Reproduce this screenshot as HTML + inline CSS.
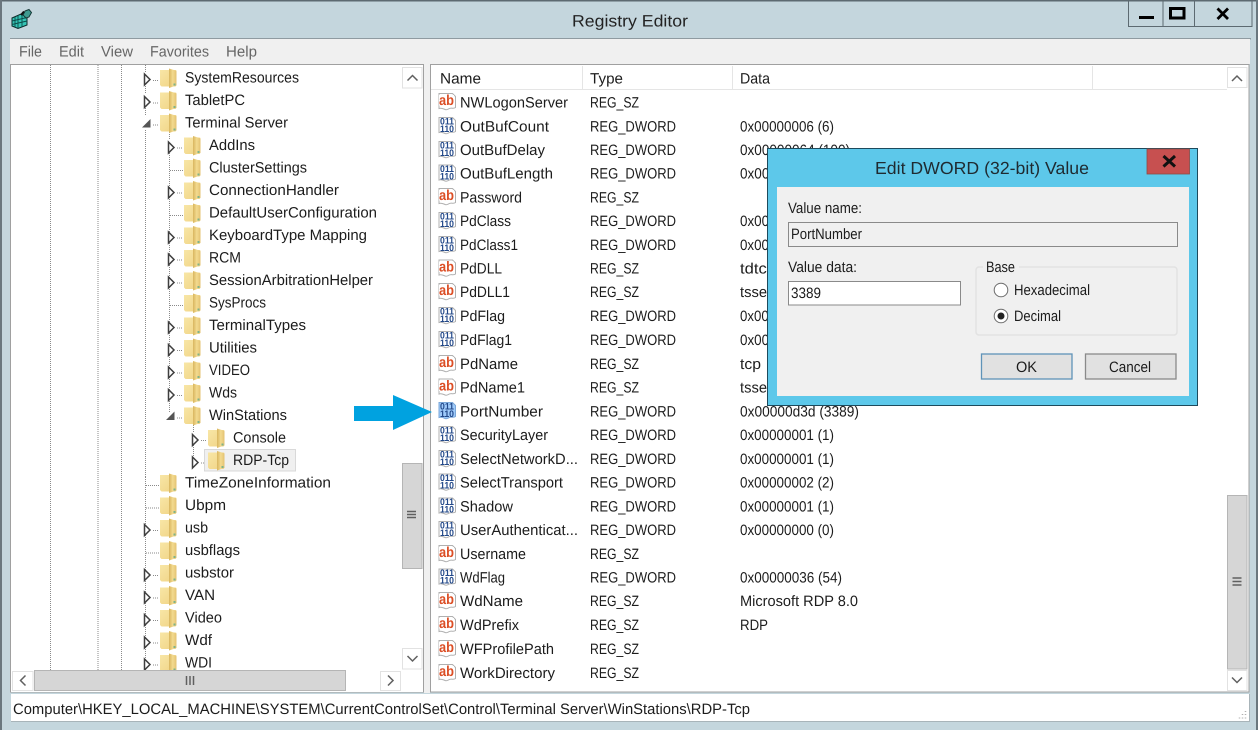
<!DOCTYPE html>
<html><head><meta charset="utf-8"><title>Registry Editor</title>
<style>
html,body{margin:0;padding:0;width:1258px;height:730px;overflow:hidden;background:#c4d6dd}
svg{display:block;filter:blur(.35px);text-rendering:geometricPrecision}
text{font-family:"Liberation Sans",sans-serif;font-size:15px;fill:#1c1c1c}
.m{fill:#666}
.d{font-size:15px}
.dot{stroke:#8a8a8a;stroke-width:1;stroke-dasharray:1 1;fill:none}
</style></head><body>
<svg width="1258" height="730" viewBox="0 0 1258 730" xmlns="http://www.w3.org/2000/svg">
<defs>
<linearGradient id="fg" x1="0" x2="1" y1="0" y2="1"><stop offset="0" stop-color="#f8e6a6"/><stop offset="1" stop-color="#f0d384"/></linearGradient>
<linearGradient id="ff" x1="0" x2="1" y1="0" y2="0"><stop offset="0" stop-color="#d9b65f"/><stop offset=".5" stop-color="#f3da8f"/><stop offset="1" stop-color="#e3c271"/></linearGradient>
<symbol id="f" width="19" height="21" viewBox="0 0 19 21" overflow="visible">
<path d="M1 2h15.500c.6 0 1 .4 1 1V17l-1 1.500H2.500L1 17z" fill="url(#fg)"/>
<path d="M10 .5l6.500 2c.7.3 1 .6 1 1.400V17.500l-7.500 2.500z" fill="url(#ff)"/>
<path d="M14.500 15.500h2v2h-2z" fill="#7eb38a"/>
</symbol>
<symbol id="ab" width="19" height="20" viewBox="0 0 19 20" overflow="visible">
<path d="M1 1.500h13.500l3 3V15.500c-2 1.500-3.500.2-5.500.8s-3 2-5 1.200S3.500 15.500 1 16.500z" fill="#fff" stroke="#b0b0b0"/>
<rect x="1" y="3" width="15" height="10.500" fill="#fff"/>
<text x="1" y="13" style="font-size:14.500px;font-weight:bold;fill:#dc4f26" textLength="15" lengthAdjust="spacingAndGlyphs">ab</text>
</symbol>
<symbol id="bn" width="19" height="20" viewBox="0 0 19 20" overflow="visible">
<path d="M1 1.500h13.500l3 3V15.500c-2 1.500-3.500.2-5.500.8s-3 2-5 1.200S3.500 15.500 1 16.500z" fill="#fff" stroke="#b0b0b0"/>
<text x="2" y="8.500" style="font-size:9.500px;font-weight:bold;fill:#23498a" textLength="14" lengthAdjust="spacingAndGlyphs">011</text>
<text x="2" y="16" style="font-size:9.500px;font-weight:bold;fill:#23498a" textLength="14" lengthAdjust="spacingAndGlyphs">110</text>
</symbol>
<symbol id="e" width="10" height="14" viewBox="0 0 10 14" overflow="visible"><path d="M1.500 1v11l5.500-5.500z" fill="#fff" stroke="#3f3f3f" stroke-width="1.500"/></symbol>
<symbol id="x" width="10" height="10" viewBox="0 0 10 10" overflow="visible"><path d="M9 0v8.500H.5z" fill="#555"/></symbol>
<clipPath id="tc"><rect x="11" y="65" width="391" height="605"/></clipPath>
<clipPath id="lc"><rect x="431" y="66" width="796" height="626"/></clipPath>
</defs>

<!-- window frame -->
<rect width="1258" height="730" fill="#c4d6dd"/>
<rect x="0" y="0" width="1258" height="1.500" fill="#5d6a71"/>
<rect x="0" y="0" width="2" height="730" fill="#6a777e"/>
<rect x="1256" y="0" width="2" height="730" fill="#6a777e"/>

<!-- icon -->
<g>
<path d="M12 18l9-4 6 3v8l-9 3.500-6-2.500z" fill="#34c3b4" stroke="#0c2b2a"/>
<path d="M15 17v10M18 16v12M22 15v12M12 21l15-3.500M12 24.500l15-3.500" stroke="#0b4c4a" stroke-width=".9"/>
<path d="M25 11l4-1.500 2.500 3-2.500 4.500-3 1-3-3z" fill="#3f9a90" stroke="#163a38"/>
<path d="M21 15l3-3.500" stroke="#111" stroke-width="2"/>
</g>
<text x="572" y="26.500" style="font-size:16.500px;fill:#222" textLength="116" lengthAdjust="spacingAndGlyphs">Registry Editor</text>

<!-- caption buttons -->
<path d="M1128.500 1v25.500h123.500V1M1163 1v25.500M1194.500 1v25.500" fill="none" stroke="#5d6a71"/>
<rect x="1139" y="16" width="15" height="3" fill="#000"/>
<rect x="1170.500" y="8.500" width="13.500" height="9.500" fill="none" stroke="#000" stroke-width="3"/>
<path d="M1217.500 8.500l10.500 10.500M1228 8.500l-10.500 10.500" stroke="#000" stroke-width="2.800"/>

<!-- menu -->
<rect x="10" y="38" width="1241" height="1.500" fill="#8f9ba1"/>
<rect x="10" y="39" width="1240" height="25" fill="#f0f0f0"/>
<text class="m" x="19" y="56.500" textLength="23" lengthAdjust="spacingAndGlyphs">File</text>
<text class="m" x="59" y="56.500" textLength="25" lengthAdjust="spacingAndGlyphs">Edit</text>
<text class="m" x="101" y="56.500" textLength="32" lengthAdjust="spacingAndGlyphs">View</text>
<text class="m" x="150" y="56.500" textLength="59" lengthAdjust="spacingAndGlyphs">Favorites</text>
<text class="m" x="226" y="56.500" textLength="31" lengthAdjust="spacingAndGlyphs">Help</text>

<!-- panes -->
<rect x="10.500" y="64.500" width="413" height="627.500" fill="#fff" stroke="#a0a0a0"/>
<rect x="424" y="64" width="6" height="629" fill="#f0f0f0"/>
<rect x="430.500" y="64.500" width="818.500" height="627.500" fill="#fff" stroke="#a0a0a0"/>

<!-- tree -->
<g clip-path="url(#tc)">
<path class="dot" d="M50.500 65V670M98 65V670M121.500 65V670M145.500 65V72M145.500 86V94M145.500 108V116M145.500 130V477M145.500 477V670M169.500 132V139M169.500 153V412M193.500 425V433M193.500 445V456"/>
<path class="dot" d="M153 80.500h6M153 103h6M153 125h6M177 148h6M170 170.500h13M177 193h6M170 215.500h13M177 238h6M177 260h6M177 283h6M170 305.500h13M177 328h6M177 350.500h6M177 373h6M177 395.500h6M177 418h6M201 440.500h6M201 463h6M146 485.500h13M146 508h13M153 530.500h6M146 553h13M153 575.500h6M153 598h6M153 620.500h6M153 643h6M153 665h6"/>
<rect x="204.500" y="449.500" width="91" height="21.500" fill="#f0f0f0" stroke="#d9d9d9"/>

<use href="#e" x="143" y="73"/><use href="#e" x="143" y="95.500"/><use href="#x" x="141.500" y="119"/>
<use href="#e" x="167" y="141"/><use href="#e" x="167" y="186"/><use href="#e" x="167" y="231"/><use href="#e" x="167" y="253"/><use href="#e" x="167" y="276"/><use href="#e" x="167" y="321"/><use href="#e" x="167" y="343.500"/><use href="#e" x="167" y="366"/><use href="#e" x="167" y="388.500"/><use href="#x" x="165.500" y="411.500"/>
<use href="#e" x="191" y="433.500"/><use href="#e" x="191" y="456"/>
<use href="#e" x="143" y="523.500"/><use href="#e" x="143" y="568.500"/><use href="#e" x="143" y="591"/><use href="#e" x="143" y="613.500"/><use href="#e" x="143" y="636"/><use href="#e" x="143" y="658"/>

<use href="#f" x="159" y="68"/><use href="#f" x="159" y="90.500"/><use href="#f" x="159" y="113"/>
<use href="#f" x="183" y="135.500"/><use href="#f" x="183" y="158"/><use href="#f" x="183" y="180.500"/><use href="#f" x="183" y="203"/><use href="#f" x="183" y="225.500"/><use href="#f" x="183" y="248"/><use href="#f" x="183" y="270.500"/><use href="#f" x="183" y="293"/><use href="#f" x="183" y="315.500"/><use href="#f" x="183" y="338"/><use href="#f" x="183" y="360.500"/><use href="#f" x="183" y="383"/><use href="#f" x="183" y="405.500"/>
<use href="#f" x="207" y="428"/><use href="#f" x="207" y="450.500"/>
<use href="#f" x="159" y="473"/><use href="#f" x="159" y="495.500"/><use href="#f" x="159" y="518"/><use href="#f" x="159" y="540.500"/><use href="#f" x="159" y="563"/><use href="#f" x="159" y="585.500"/><use href="#f" x="159" y="608"/><use href="#f" x="159" y="630.500"/><use href="#f" x="159" y="653"/>

<text x="185" y="82.500" textLength="114" lengthAdjust="spacingAndGlyphs">SystemResources</text>
<text x="185" y="105" textLength="60" lengthAdjust="spacingAndGlyphs">TabletPC</text>
<text x="185" y="127.500" textLength="103" lengthAdjust="spacingAndGlyphs">Terminal Server</text>
<text x="209" y="150" textLength="46" lengthAdjust="spacingAndGlyphs">AddIns</text>
<text x="209" y="172.500" textLength="98" lengthAdjust="spacingAndGlyphs">ClusterSettings</text>
<text x="209" y="195" textLength="130" lengthAdjust="spacingAndGlyphs">ConnectionHandler</text>
<text x="209" y="217.500" textLength="168" lengthAdjust="spacingAndGlyphs">DefaultUserConfiguration</text>
<text x="209" y="240" textLength="158" lengthAdjust="spacingAndGlyphs">KeyboardType Mapping</text>
<text x="209" y="262.500" textLength="32" lengthAdjust="spacingAndGlyphs">RCM</text>
<text x="209" y="285" textLength="164" lengthAdjust="spacingAndGlyphs">SessionArbitrationHelper</text>
<text x="209" y="307.500" textLength="57" lengthAdjust="spacingAndGlyphs">SysProcs</text>
<text x="209" y="330" textLength="97" lengthAdjust="spacingAndGlyphs">TerminalTypes</text>
<text x="209" y="352.500" textLength="48" lengthAdjust="spacingAndGlyphs">Utilities</text>
<text x="209" y="375" textLength="41" lengthAdjust="spacingAndGlyphs">VIDEO</text>
<text x="209" y="397.500" textLength="28" lengthAdjust="spacingAndGlyphs">Wds</text>
<text x="209" y="420" textLength="78" lengthAdjust="spacingAndGlyphs">WinStations</text>
<text x="233" y="442.500" textLength="53" lengthAdjust="spacingAndGlyphs">Console</text>
<text x="233" y="465" textLength="56" lengthAdjust="spacingAndGlyphs">RDP-Tcp</text>
<text x="185" y="487.500" textLength="146" lengthAdjust="spacingAndGlyphs">TimeZoneInformation</text>
<text x="185" y="510" textLength="41" lengthAdjust="spacingAndGlyphs">Ubpm</text>
<text x="185" y="532.500" textLength="23" lengthAdjust="spacingAndGlyphs">usb</text>
<text x="185" y="555" textLength="55" lengthAdjust="spacingAndGlyphs">usbflags</text>
<text x="185" y="577.500" textLength="49" lengthAdjust="spacingAndGlyphs">usbstor</text>
<text x="185" y="600" textLength="30" lengthAdjust="spacingAndGlyphs">VAN</text>
<text x="185" y="622.500" textLength="37" lengthAdjust="spacingAndGlyphs">Video</text>
<text x="185" y="645" textLength="27" lengthAdjust="spacingAndGlyphs">Wdf</text>
<text x="185" y="667.500" textLength="27" lengthAdjust="spacingAndGlyphs">WDI</text>
</g>

<!-- tree scrollbars -->
<rect x="402" y="65.500" width="21" height="604" fill="#fff"/>
<rect x="402.500" y="67.500" width="19.500" height="20.500" fill="#fff" stroke="#e2e2e2"/>
<path d="M407.500 80.500l5-5 5 5" fill="none" stroke="#606060" stroke-width="1.500"/>
<rect x="402.500" y="463.500" width="19.500" height="105" fill="#d6d6d6" stroke="#b5b5b5"/>
<path d="M407 511.500h9M407 514.500h9M407 517.500h9" stroke="#606060" stroke-width="1.500"/>
<rect x="402.500" y="648.500" width="19.500" height="20.500" fill="#fff" stroke="#e2e2e2"/>
<path d="M407.500 656l5 5 5-5" fill="none" stroke="#606060" stroke-width="1.500"/>
<rect x="11" y="670" width="412" height="22" fill="#fff"/>
<rect x="12.500" y="671.500" width="20.500" height="19" fill="#fff" stroke="#e2e2e2"/>
<path d="M25.500 675.500l-5 5 5 5" fill="none" stroke="#606060" stroke-width="1.500"/>
<rect x="34.500" y="670.500" width="311" height="20" fill="#d6d6d6" stroke="#b5b5b5"/>
<path d="M186.500 676v9M190 676v9M193.500 676v9" stroke="#606060" stroke-width="1.500"/>
<rect x="380.500" y="671.500" width="20" height="19" fill="#fff" stroke="#e2e2e2"/>
<path d="M388 675.500l5 5-5 5" fill="none" stroke="#606060" stroke-width="1.500"/>

<!-- list header -->
<rect x="431" y="65" width="796" height="24" fill="#fff"/>
<path d="M431 89.500h796M582.500 66v23M732.500 66v23M1092.500 66v23" stroke="#e5e5e5" fill="none"/>
<text x="440" y="83.500" textLength="41" lengthAdjust="spacingAndGlyphs">Name</text>
<text x="590" y="83.500" textLength="33" lengthAdjust="spacingAndGlyphs">Type</text>
<text x="740" y="83.500" textLength="30" lengthAdjust="spacingAndGlyphs">Data</text>

<!-- list scrollbar -->
<rect x="1227" y="66" width="21" height="625" fill="#fff"/>
<rect x="1227.500" y="67.500" width="19.500" height="20" fill="#fff" stroke="#e2e2e2"/>
<path d="M1232 81l5-5 5 5" fill="none" stroke="#606060" stroke-width="1.500"/>
<rect x="1227.500" y="495.500" width="19.500" height="173.500" fill="#d6d6d6" stroke="#b5b5b5"/>
<path d="M1232.500 578h9M1232.500 581.500h9M1232.500 585h9" stroke="#606060" stroke-width="1.500"/>
<rect x="1227.500" y="670.500" width="19.500" height="20" fill="#fff" stroke="#e2e2e2"/>
<path d="M1232 677.500l5 5 5-5" fill="none" stroke="#606060" stroke-width="1.500"/>

<!-- list rows -->
<g clip-path="url(#lc)">
<use href="#ab" x="438" y="92"/><use href="#bn" x="438" y="116"/><use href="#bn" x="438" y="140"/><use href="#bn" x="438" y="163.500"/><use href="#ab" x="438" y="187"/><use href="#bn" x="438" y="211"/><use href="#bn" x="438" y="235"/><use href="#ab" x="438" y="258.500"/><use href="#ab" x="438" y="282"/><use href="#bn" x="438" y="306"/><use href="#bn" x="438" y="330"/><use href="#ab" x="438" y="354"/><use href="#ab" x="438" y="377.500"/>
<path d="M439 402.500h13.500l3 3v11c-2 1.500-3.500.2-5.500.8s-3 2-5 1.200-3-2-6-1z" fill="#9fcbfb" stroke="#7ba7d8"/>
<text x="440" y="409.500" style="font-size:9.500px;font-weight:bold;fill:#23498a" textLength="14" lengthAdjust="spacingAndGlyphs">011</text>
<text x="440" y="417" style="font-size:9.500px;font-weight:bold;fill:#23498a" textLength="14" lengthAdjust="spacingAndGlyphs">110</text>
<use href="#bn" x="438" y="425"/><use href="#bn" x="438" y="449"/><use href="#bn" x="438" y="472.500"/><use href="#bn" x="438" y="496.500"/><use href="#bn" x="438" y="520"/><use href="#ab" x="438" y="544"/><use href="#bn" x="438" y="567.500"/><use href="#ab" x="438" y="591"/><use href="#ab" x="438" y="615"/><use href="#ab" x="438" y="639"/><use href="#ab" x="438" y="663"/>

<text x="460" y="107.500" textLength="108" lengthAdjust="spacingAndGlyphs">NWLogonServer</text><text class="d" x="590" y="107.500" textLength="49" lengthAdjust="spacingAndGlyphs">REG_SZ</text>
<text x="460" y="131.500" textLength="89" lengthAdjust="spacingAndGlyphs">OutBufCount</text><text class="d" x="590" y="131.500" textLength="86" lengthAdjust="spacingAndGlyphs">REG_DWORD</text><text class="d" x="740" y="131.500" textLength="94" lengthAdjust="spacingAndGlyphs">0x00000006 (6)</text>
<text x="460" y="155" textLength="85" lengthAdjust="spacingAndGlyphs">OutBufDelay</text><text class="d" x="590" y="155" textLength="86" lengthAdjust="spacingAndGlyphs">REG_DWORD</text><text class="d" x="740" y="155" textLength="110" lengthAdjust="spacingAndGlyphs">0x00000064 (100)</text>
<text x="460" y="178.500" textLength="93" lengthAdjust="spacingAndGlyphs">OutBufLength</text><text class="d" x="590" y="178.500" textLength="86" lengthAdjust="spacingAndGlyphs">REG_DWORD</text><text class="d" x="740" y="178.500" textLength="110" lengthAdjust="spacingAndGlyphs">0x00000212 (530)</text>
<text x="460" y="202.500" textLength="62" lengthAdjust="spacingAndGlyphs">Password</text><text class="d" x="590" y="202.500" textLength="49" lengthAdjust="spacingAndGlyphs">REG_SZ</text>
<text x="460" y="226" textLength="51" lengthAdjust="spacingAndGlyphs">PdClass</text><text class="d" x="590" y="226" textLength="86" lengthAdjust="spacingAndGlyphs">REG_DWORD</text><text class="d" x="740" y="226" textLength="94" lengthAdjust="spacingAndGlyphs">0x00000002 (2)</text>
<text x="460" y="250" textLength="58" lengthAdjust="spacingAndGlyphs">PdClass1</text><text class="d" x="590" y="250" textLength="86" lengthAdjust="spacingAndGlyphs">REG_DWORD</text><text class="d" x="740" y="250" textLength="100" lengthAdjust="spacingAndGlyphs">0x0000000b (11)</text>
<text x="460" y="273.500" textLength="42" lengthAdjust="spacingAndGlyphs">PdDLL</text><text class="d" x="590" y="273.500" textLength="49" lengthAdjust="spacingAndGlyphs">REG_SZ</text><text class="d" x="740" y="273.500" textLength="36" lengthAdjust="spacingAndGlyphs">tdtcp</text>
<text x="460" y="297" textLength="50" lengthAdjust="spacingAndGlyphs">PdDLL1</text><text class="d" x="590" y="297" textLength="49" lengthAdjust="spacingAndGlyphs">REG_SZ</text><text class="d" x="740" y="297" textLength="54" lengthAdjust="spacingAndGlyphs">tssecsrv</text>
<text x="460" y="321" textLength="45" lengthAdjust="spacingAndGlyphs">PdFlag</text><text class="d" x="590" y="321" textLength="86" lengthAdjust="spacingAndGlyphs">REG_DWORD</text><text class="d" x="740" y="321" textLength="100" lengthAdjust="spacingAndGlyphs">0x0000004e (78)</text>
<text x="460" y="345" textLength="52" lengthAdjust="spacingAndGlyphs">PdFlag1</text><text class="d" x="590" y="345" textLength="86" lengthAdjust="spacingAndGlyphs">REG_DWORD</text><text class="d" x="740" y="345" textLength="94" lengthAdjust="spacingAndGlyphs">0x00000000 (0)</text>
<text x="460" y="369" textLength="58" lengthAdjust="spacingAndGlyphs">PdName</text><text class="d" x="590" y="369" textLength="49" lengthAdjust="spacingAndGlyphs">REG_SZ</text><text class="d" x="740" y="369" textLength="21" lengthAdjust="spacingAndGlyphs">tcp</text>
<text x="460" y="392.500" textLength="65" lengthAdjust="spacingAndGlyphs">PdName1</text><text class="d" x="590" y="392.500" textLength="49" lengthAdjust="spacingAndGlyphs">REG_SZ</text><text class="d" x="740" y="392.500" textLength="54" lengthAdjust="spacingAndGlyphs">tssecsrv</text>
<text x="460" y="416.500" textLength="83" lengthAdjust="spacingAndGlyphs">PortNumber</text><text class="d" x="590" y="416.500" textLength="86" lengthAdjust="spacingAndGlyphs">REG_DWORD</text><text class="d" x="740" y="416.500" textLength="119" lengthAdjust="spacingAndGlyphs">0x00000d3d (3389)</text>
<text x="460" y="440" textLength="88" lengthAdjust="spacingAndGlyphs">SecurityLayer</text><text class="d" x="590" y="440" textLength="86" lengthAdjust="spacingAndGlyphs">REG_DWORD</text><text class="d" x="740" y="440" textLength="94" lengthAdjust="spacingAndGlyphs">0x00000001 (1)</text>
<text x="460" y="464" textLength="118" lengthAdjust="spacingAndGlyphs">SelectNetworkD...</text><text class="d" x="590" y="464" textLength="86" lengthAdjust="spacingAndGlyphs">REG_DWORD</text><text class="d" x="740" y="464" textLength="94" lengthAdjust="spacingAndGlyphs">0x00000001 (1)</text>
<text x="460" y="487.500" textLength="103" lengthAdjust="spacingAndGlyphs">SelectTransport</text><text class="d" x="590" y="487.500" textLength="86" lengthAdjust="spacingAndGlyphs">REG_DWORD</text><text class="d" x="740" y="487.500" textLength="94" lengthAdjust="spacingAndGlyphs">0x00000002 (2)</text>
<text x="460" y="511.500" textLength="53" lengthAdjust="spacingAndGlyphs">Shadow</text><text class="d" x="590" y="511.500" textLength="86" lengthAdjust="spacingAndGlyphs">REG_DWORD</text><text class="d" x="740" y="511.500" textLength="94" lengthAdjust="spacingAndGlyphs">0x00000001 (1)</text>
<text x="460" y="535" textLength="118" lengthAdjust="spacingAndGlyphs">UserAuthenticat...</text><text class="d" x="590" y="535" textLength="86" lengthAdjust="spacingAndGlyphs">REG_DWORD</text><text class="d" x="740" y="535" textLength="94" lengthAdjust="spacingAndGlyphs">0x00000000 (0)</text>
<text x="460" y="559" textLength="66" lengthAdjust="spacingAndGlyphs">Username</text><text class="d" x="590" y="559" textLength="49" lengthAdjust="spacingAndGlyphs">REG_SZ</text>
<text x="460" y="582.500" textLength="45" lengthAdjust="spacingAndGlyphs">WdFlag</text><text class="d" x="590" y="582.500" textLength="86" lengthAdjust="spacingAndGlyphs">REG_DWORD</text><text class="d" x="740" y="582.500" textLength="102" lengthAdjust="spacingAndGlyphs">0x00000036 (54)</text>
<text x="460" y="606" textLength="63" lengthAdjust="spacingAndGlyphs">WdName</text><text class="d" x="590" y="606" textLength="49" lengthAdjust="spacingAndGlyphs">REG_SZ</text><text class="d" x="740" y="606" textLength="118" lengthAdjust="spacingAndGlyphs">Microsoft RDP 8.0</text>
<text x="460" y="630" textLength="59" lengthAdjust="spacingAndGlyphs">WdPrefix</text><text class="d" x="590" y="630" textLength="49" lengthAdjust="spacingAndGlyphs">REG_SZ</text><text class="d" x="740" y="630" textLength="28" lengthAdjust="spacingAndGlyphs">RDP</text>
<text x="460" y="654" textLength="94" lengthAdjust="spacingAndGlyphs">WFProfilePath</text><text class="d" x="590" y="654" textLength="49" lengthAdjust="spacingAndGlyphs">REG_SZ</text>
<text x="460" y="678" textLength="95" lengthAdjust="spacingAndGlyphs">WorkDirectory</text><text class="d" x="590" y="678" textLength="49" lengthAdjust="spacingAndGlyphs">REG_SZ</text>
</g>

<!-- arrow -->
<path d="M354 406h39v-11l39 17-39 18v-9h-39z" fill="#00a2e0"/>

<!-- status bar -->
<rect x="11" y="694" width="1238" height="27.500" fill="#fff"/>
<path d="M11 721.500h1238.500V694" fill="none" stroke="#a8b4b9"/>
<text x="13" y="714" textLength="737" lengthAdjust="spacingAndGlyphs">Computer\HKEY_LOCAL_MACHINE\SYSTEM\CurrentControlSet\Control\Terminal Server\WinStations\RDP-Tcp</text>
<path d="M1245.500 711v1M1242.500 714v1M1245.500 714v1M1239.500 717.500v1M1242.500 717.500v1M1245.500 717.500v1" stroke="#b0b0b0" stroke-width="1.500"/>

<!-- dialog -->
<rect x="767.500" y="148.500" width="430" height="257" fill="#5dc8ea" stroke="#1d4a5c"/>
<rect x="777" y="187" width="412" height="209" fill="#f0f0f0"/>
<rect x="1147" y="149" width="42.500" height="25" fill="#c75050" stroke="#8d4a44" stroke-width=".8"/>
<path d="M1163.500 156l11.500 10.500M1175 156l-11.500 10.500" stroke="#111" stroke-width="3"/>
<text x="875" y="174" style="font-size:17.500px;fill:#1f2a30" textLength="214" lengthAdjust="spacingAndGlyphs">Edit DWORD (32-bit) Value</text>
<text class="d" x="788" y="213" textLength="74" lengthAdjust="spacingAndGlyphs">Value name:</text>
<rect x="788.500" y="222.500" width="389" height="24" fill="#f0f0f0" stroke="#8a8a8a"/>
<text class="d" x="791" y="239" textLength="71" lengthAdjust="spacingAndGlyphs">PortNumber</text>
<text class="d" x="788" y="272" textLength="69" lengthAdjust="spacingAndGlyphs">Value data:</text>
<rect x="788.500" y="281.500" width="172" height="23.500" fill="#fff" stroke="#8a8a8a"/>
<text class="d" x="791" y="298" textLength="30" lengthAdjust="spacingAndGlyphs">3389</text>
<rect x="976" y="267" width="201" height="68" rx="3" fill="none" stroke="#e2e2e2" stroke-width="1.500"/>
<rect x="983" y="262" width="36" height="12" fill="#f0f0f0"/>
<text class="d" x="986" y="272" textLength="29" lengthAdjust="spacingAndGlyphs">Base</text>
<circle cx="1001" cy="290" r="6.800" fill="#fff" stroke="#6b6b6b"/>
<text class="d" x="1014" y="295" textLength="76" lengthAdjust="spacingAndGlyphs">Hexadecimal</text>
<circle cx="1001" cy="316" r="6.800" fill="#fff" stroke="#6b6b6b"/>
<circle cx="1001" cy="316" r="3.500" fill="#222"/>
<text class="d" x="1014" y="321" textLength="47" lengthAdjust="spacingAndGlyphs">Decimal</text>
<rect x="981.500" y="354" width="90.500" height="25" fill="#e1e1e1" stroke="#5f93b8" stroke-width="1.300"/>
<text class="d" x="1016" y="372" textLength="21" lengthAdjust="spacingAndGlyphs">OK</text>
<rect x="1085.500" y="354" width="90.500" height="25" fill="#e1e1e1" stroke="#8a8a8a" stroke-width="1.300"/>
<text class="d" x="1109" y="372" textLength="42" lengthAdjust="spacingAndGlyphs">Cancel</text>
</svg>
</body></html>
